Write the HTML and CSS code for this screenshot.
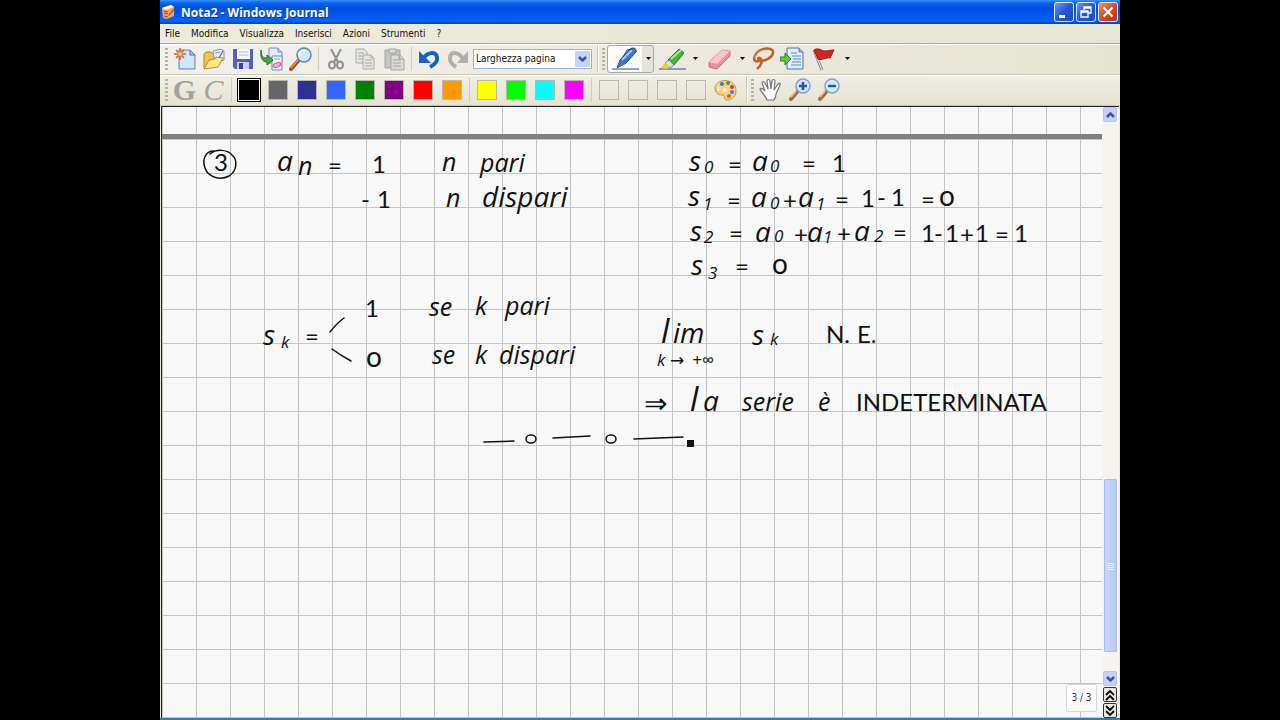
FILE: index.html
```
<!DOCTYPE html>
<html lang="it">
<head>
    <meta charset="UTF-8">
    <meta name="viewport" content="width=device-width, initial-scale=1.0">
    <title>Nota2 - Windows Journal</title>
    <link rel="stylesheet" href="styles.css">
</head>
<body>
<div class="window">
    <header class="titlebar">
        <svg class="app-icon" width="14" height="16" viewBox="0 0 14 16"><path d="M1 4l9-3 3 2v9l-7 3-4-1z" fill="#f3a45e"/><path d="M1 4l9-3 3 2-8 3z" fill="#fff0d8"/><path d="M3 7l4 1M3 9l4 1M3 12l4 1" stroke="#a3441c" stroke-width="1"/><path d="M13 4l-5 6-1 2 2-1 5-6z" fill="#c2541b"/></svg>
        <h1>Nota2 - Windows Journal</h1>
        <div class="caption-buttons">
            <button class="cap" aria-label="Riduci a icona"><svg width="18" height="18"><path d="M4 12h6v3H4z" fill="#fff"/></svg></button>
            <button class="cap" aria-label="Ripristina"><svg width="18" height="18"><path d="M7 7V4h7v6h-3M7 5h7M4 8h7v6H4zM4 9h7" fill="none" stroke="#fff" stroke-width="1.3"/></svg></button>
            <button class="cap close" aria-label="Chiudi"><svg width="18" height="18"><path d="M4.500 4.500l9 9M13.500 4.500l-9 9" stroke="#fff" stroke-width="2.200"/></svg></button>
        </div>
    </header>

    <nav class="menubar">
        <button>File</button>
        <button>Modifica</button>
        <button>Visualizza</button>
        <button>Inserisci</button>
        <button>Azioni</button>
        <button>Strumenti</button>
        <button>?</button>
    </nav>

    <div class="toolbar">
        <span class="grip"></span>
        <button class="tool" aria-label="Nuova nota"><svg width="24" height="24" viewBox="0 0 24 24"><path d="M6 3h11l5 5v14H6z" fill="#c3dafa" stroke="#6585bd"/><path d="M7 4h9v5l5 0v12H7z" fill="#eef5ff" opacity=".4"/><path d="M17 3v5h5z" fill="#a9c6ef" stroke="#4f74b4"/><path d="M7 1v12M1 7h12M3 3l8 8M11 3l-8 8" stroke="#e0561f" stroke-width="1.600"/><circle cx="7" cy="7" r="2" fill="#ffd35c"/></svg></button>
        <button class="tool" aria-label="Apri"><svg width="24" height="24" viewBox="0 0 24 24"><path d="M2 21V7l2-2h5l2 2h3v4" fill="#ecc74c" stroke="#a98a26"/><path d="M11 4l8-2 3 2v9l-9 3z" fill="#eaf2ff" stroke="#7f94b8"/><path d="M13 6l5-1" stroke="#7fa1d8"/><path d="M2 22l5-9 6-1 1-2 7 1-5 9z" fill="#ffe88b" stroke="#b59226"/><path d="M21 4l-4 7" stroke="#5579bd" stroke-width="1.500"/></svg></button>
        <button class="tool" aria-label="Salva"><svg width="24" height="24" viewBox="0 0 24 24"><path d="M2 2h20v20H4l-2-2z" fill="#5a5cbd"/><path d="M6 2h13v10H6z" fill="#f7f7fb"/><path d="M8 5h9M8 8h9" stroke="#b8b8cc"/><path d="M6 15h12v7H6z" fill="#c9cdea"/><path d="M8 16h4v6H8z" fill="#3f4097"/></svg></button>
        <button class="tool" aria-label="Esporta"><svg width="24" height="24" viewBox="0 0 24 24"><path d="M9 1h9l4 4v11H9z" fill="#e2edfc" stroke="#7092c9"/><path d="M12 9h10v14H12z" fill="#edf3fd" stroke="#6c86b9"/><path d="M18 1v4h4" fill="#b5ceef" stroke="#7092c9"/><path d="M14 12h6" stroke="#7fa1d8"/><ellipse cx="17" cy="18" rx="4" ry="2" fill="#f1b5cd" stroke="#c25583" transform="rotate(-20 17 18)"/><path d="M1 3c0 6 2 8 6 8V8l6 5-6 5v-3C2 15 0 10 1 3z" fill="#41a939" stroke="#1b7420"/></svg></button>
        <button class="tool" aria-label="Trova"><svg width="24" height="24" viewBox="0 0 24 24"><path d="M9 14l-7 8" stroke="#965423" stroke-width="4" stroke-linecap="round"/><path d="M9 13l-7 8" stroke="#dd9c5c" stroke-width="1.500"/><circle cx="15" cy="8" r="7" fill="#cfeafa" stroke="#5d88bf" stroke-width="1.500"/><path d="M10 8c1-4 4-5 7-4" fill="none" stroke="#fff" stroke-width="2"/></svg></button>
        <span class="sep"></span>
        <button class="tool" aria-label="Taglia"><svg width="24" height="24" viewBox="0 0 24 24" fill="none" stroke="#8e8e8e" stroke-width="2"><path d="M7 2l7 13M17 2l-7 13"/><ellipse cx="8" cy="18" rx="3" ry="3.500"/><ellipse cx="16" cy="18" rx="3" ry="3.500"/></svg></button>
        <button class="tool" aria-label="Copia"><svg width="24" height="24" viewBox="0 0 24 24" fill="#e6e5e1" stroke="#aaa"><path d="M3 2h8l3 3v11H3zM5 6h6M5 9h6M5 12h4"/><path d="M10 8h8l3 3v11H10zM12 13h7M12 16h7M12 19h7M18 8v3h3"/></svg></button>
        <button class="tool" aria-label="Incolla"><svg width="24" height="24" viewBox="0 0 24 24" fill="#dcdbd7" stroke="#a4a4a4"><path d="M3 3h15v18H3z" fill="#c6c5c1"/><path d="M7 2h7v4H7z"/><path d="M9 8h9l4 4v11H9zM11 13h8M11 16h8M11 19h8M17 8v4h5"/></svg></button>
        <span class="sep"></span>
        <button class="tool" aria-label="Annulla"><svg width="24" height="24" viewBox="0 0 24 24"><path d="M6 12c4-7 13-8 14-2 1 5-3 8-7 10" fill="none" stroke="#1b62bd" stroke-width="4"/><path d="M2 4v12h12z" fill="#1b62bd"/></svg></button>
        <button class="tool" aria-label="Ripeti"><svg width="24" height="24" viewBox="0 0 24 24"><path d="M17 12C13 5 5 4 4 10c-1 5 3 8 6 10" fill="none" stroke="#aeaeac" stroke-width="4"/><path d="M22 4v12H11z" fill="#aeaeac"/></svg></button>
        <span class="combo">
            <select aria-label="Zoom"><option>Larghezza pagina</option></select>
            <svg class="combo-arrow" width="15" height="16"><path d="M4 6l3.500 3.500L11 6" fill="none" stroke="#41558a" stroke-width="2.500"/></svg>
        </span>
        <span class="band"></span>
        <span class="grip"></span>
        <button class="split selected" aria-label="Penna"><svg width="30" height="24" viewBox="0 0 30 24"><path d="M3 22h27" stroke="#30478b"/><path d="M8 21l3-8L21 2c3-2 7-1 6 3L17 16z" fill="#3a76cf" stroke="#20448e"/><path d="M13 13L23 3" stroke="#9cc7f7" stroke-width="2"/><path d="M8 21l3-8 5 4z" fill="#5674a9"/><path d="M14 10l4-7 5-1" fill="none" stroke="#20448e"/></svg><svg class="drop" width="7" height="5"><path d="M1 1h5L3.500 4z"/></svg></button>
        <button class="split" aria-label="Evidenziatore"><svg width="30" height="24" viewBox="0 0 30 24"><path d="M3 22h27" stroke="#30478b"/><path d="M12 13L23 2l5 4-10 12z" fill="#46b439" stroke="#247d20"/><path d="M15 12L25 3" stroke="#a4ed83" stroke-width="2"/><path d="M9 16l4-3 5 5-4 3z" fill="#d8dde3" stroke="#7b8792"/><path d="M5 21l4-5 5 4-4 2z" fill="#e9ce2e"/></svg><svg class="drop" width="7" height="5"><path d="M1 1h5L3.500 4z"/></svg></button>
        <button class="split" aria-label="Gomma"><svg width="30" height="24" viewBox="0 0 30 24"><path d="M6 15L19 3l8 1v5L14 22l-8-2z" fill="#eb8f9d" stroke="#c16f7b"/><path d="M6 15L19 3l8 1-13 13z" fill="#fac5cb"/></svg><svg class="drop" width="7" height="5"><path d="M1 1h5L3.500 4z"/></svg></button>
        <button class="tool" aria-label="Selezione"><svg width="24" height="24" viewBox="0 0 24 24" fill="none" stroke="#bd6326" stroke-width="2.500"><path d="M8 14C1 16 2 9 8 4c6-4 15-3 14 2s-8 8-13 8c-3-1-2-4 0-3 3 2 2 7-3 11"/><path d="M4 11C5 6 10 3 15 3" stroke="#f3b17a" stroke-width="1"/></svg></button>
        <button class="tool" aria-label="Inserisci spazio"><svg width="24" height="24" viewBox="0 0 24 24"><path d="M7 1h12l4 4v17H7z" fill="#e4effe" stroke="#4a73b5"/><path d="M19 1v4h4" fill="#a7c7f0" stroke="#4a73b5"/><path d="M11 6h6M12 9h9M13 12h8M12 15h9M11 18h10" stroke="#5688c8"/><path d="M0 10h5V6l6 6-6 6v-4H0z" fill="#65c642" stroke="#277e20"/></svg></button>
        <button class="split" aria-label="Contrassegno"><svg width="30" height="24" viewBox="0 0 30 24"><path d="M6 3l8 20" stroke="#8a8a8a" stroke-width="3"/><path d="M6 3l8 20" stroke="#eee"/><path d="M6 3c5-3 7 1 11 1s5-1 9-1l-4 8c-5-1-8 3-12 1z" fill="#d42420" stroke="#8d1715"/></svg><svg class="drop" width="7" height="5"><path d="M1 1h5L3.500 4z"/></svg></button>
    </div>

    <div class="toolbar colors">
        <span class="grip"></span>
        <button class="tool letter bold">G</button>
        <button class="tool letter italic">C</button>
        <span class="sep"></span>
        <button class="tool" aria-label="Nero"><i class="swatch black current"></i></button>
        <button class="tool" aria-label="Grigio"><i class="swatch gray"></i></button>
        <button class="tool" aria-label="Blu scuro"><i class="swatch navy"></i></button>
        <button class="tool" aria-label="Blu"><i class="swatch blue"></i></button>
        <button class="tool" aria-label="Verde"><i class="swatch green"></i></button>
        <button class="tool" aria-label="Viola"><i class="swatch purple"></i></button>
        <button class="tool" aria-label="Rosso"><i class="swatch red"></i></button>
        <button class="tool" aria-label="Arancione"><i class="swatch orange"></i></button>
        <span class="sep"></span>
        <button class="tool" aria-label="Giallo"><i class="swatch yellow"></i></button>
        <button class="tool" aria-label="Verde chiaro"><i class="swatch lime"></i></button>
        <button class="tool" aria-label="Ciano"><i class="swatch cyan"></i></button>
        <button class="tool" aria-label="Magenta"><i class="swatch magenta"></i></button>
        <span class="sep"></span>
        <button class="tool" aria-label="Colore 1"><i class="swatch"></i></button>
        <button class="tool" aria-label="Colore 2"><i class="swatch"></i></button>
        <button class="tool" aria-label="Colore 3"><i class="swatch"></i></button>
        <button class="tool" aria-label="Colore 4"><i class="swatch"></i></button>
        <button class="tool" aria-label="Tavolozza"><svg width="24" height="24" viewBox="0 0 24 24"><path d="M2 9C4 1 18 0 22 8c3 7-1 14-8 14-4 0-1-4-4-5-3 0-8 0-8-8z" fill="#f9d183" stroke="#c9953f"/><circle cx="9" cy="6" r="2" fill="#4272c4"/><circle cx="15" cy="5" r="2" fill="#3fa047"/><circle cx="19" cy="9" r="2" fill="#d13b2e"/><circle cx="19" cy="14" r="2" fill="#3b7fd4"/><circle cx="16" cy="18" r="2" fill="#df5a36"/><circle cx="6" cy="11" r="2" fill="#fff3d2"/><circle cx="12" cy="12" r="2" fill="#fff7e4"/></svg></button>
        <span class="band"></span>
        <span class="grip"></span>
        <button class="tool" aria-label="Mano"><svg width="24" height="24" viewBox="0 0 24 24"><path d="M8 22c-1-4-6-8-7-11 1-2 4 1 5 2L3 5c0-2 2-2 3 0l3 6L8 3c0-2 3-2 3 0l1 8 1-8c0-2 3-2 3 0l-1 9 4-6c1-1 3-1 2 1l-4 9c0 3-1 4-2 6z" fill="#fff" stroke="#777" stroke-width="1.200"/></svg></button>
        <button class="tool" aria-label="Zoom avanti"><svg width="24" height="24" viewBox="0 0 24 24"><path d="M9 14l-6 7" stroke="#a36c3a" stroke-width="4" stroke-linecap="round"/><path d="M8 13l-5 6" stroke="#ecc49b" stroke-width="1.500"/><circle cx="15" cy="8" r="7" fill="#d6e9fb" stroke="#7fa3d3" stroke-width="1.500"/><path d="M15 4v8M11 8h8" stroke="#2458ac" stroke-width="2.500"/></svg></button>
        <button class="tool" aria-label="Zoom indietro"><svg width="24" height="24" viewBox="0 0 24 24"><path d="M9 14l-6 7" stroke="#a36c3a" stroke-width="4" stroke-linecap="round"/><path d="M8 13l-5 6" stroke="#ecc49b" stroke-width="1.500"/><circle cx="15" cy="8" r="7" fill="#d6e9fb" stroke="#7fa3d3" stroke-width="1.500"/><path d="M11 8h8" stroke="#2458ac" stroke-width="2.500"/></svg></button>
    </div>

    <main class="workspace">
        <div class="paper">
            <div class="page-break"></div>
            <!-- notes, one text per pen group -->
            <svg class="ink" width="100%" height="100%">
                <g transform="translate(-162 -107)">
                    <path class="stroke" d="M214 151C205 151 202 160 205 168c3 9 15 13 24 8 8-5 9-16 3-21-5-6-16-6-22-1"/>
                    <text class="num" x="214" y="171">3</text>
                    <text class="big" x="277" y="171">a</text><text class="mid" x="298" y="175">n</text>
                    <text class="num" x="328" y="174">=</text><text class="num" x="372" y="173">1</text>
                    <text class="mid" x="442" y="171">n</text><text class="mid" x="480" y="172">pari</text>
                    <text class="num" x="361" y="208">-</text><text class="num" x="377" y="208">1</text>
                    <text class="mid" x="446" y="207">n</text><text class="big" x="482" y="207">dispari</text>

                    <text class="big" x="689" y="171">s</text><text class="sub" x="704" y="173">0</text>
                    <text class="num" x="728" y="173">=</text><text class="big" x="752" y="171">a</text><text class="sub" x="770" y="172">0</text>
                    <text class="num" x="802" y="172">=</text><text class="num" x="832" y="172">1</text>

                    <text class="big" x="688" y="206">s</text><text class="sub" x="703" y="210">1</text>
                    <text class="num" x="727" y="209">=</text><text class="big" x="751" y="207">a</text><text class="sub" x="770" y="209">0</text>
                    <text class="num" x="783" y="209">+</text><text class="big" x="798" y="207">a</text><text class="sub" x="816" y="210">1</text>
                    <text class="num" x="835" y="208">=</text><text class="num" x="861" y="207">1</text><text class="num" x="877" y="206">-</text><text class="num" x="891" y="206">1</text>
                    <text class="num" x="921" y="208">=</text><text class="num oval" x="939" y="206">o</text>

                    <text class="big" x="690" y="241">s</text><text class="sub" x="704" y="243">2</text>
                    <text class="num" x="729" y="242">=</text><text class="big" x="755" y="242">a</text><text class="sub" x="774" y="242">0</text>
                    <text class="num" x="794" y="243">+</text><text class="big" x="807" y="242">a</text><text class="sub" x="823" y="243">1</text>
                    <text class="num" x="837" y="242">+</text><text class="big" x="854" y="241">a</text><text class="sub" x="874" y="242">2</text>
                    <text class="num" x="893" y="241">=</text><text class="num" x="921" y="242">1</text><text class="num" x="934" y="242">-</text><text class="num" x="945" y="242">1</text>
                    <text class="num" x="960" y="243">+</text><text class="num" x="975" y="242">1</text><text class="num" x="995" y="243">=</text><text class="num" x="1014" y="242">1</text>

                    <text class="big" x="691" y="275">s</text><text class="sub" x="708" y="279">3</text>
                    <text class="num" x="735" y="275">=</text><text class="num oval" x="772" y="274">o</text>

                    <text class="big" x="263" y="345">s</text><text class="sub" x="281" y="348">k</text><text class="num" x="305" y="345">=</text>
                    <path class="stroke" d="M330 332q7-9 14-14M332 349q8 6 19 12"/>
                    <text class="num" x="365" y="317">1</text><text class="num oval" x="366" y="367">o</text>
                    <text class="mid" x="429" y="316">se</text><text class="mid" x="475" y="315">k</text><text class="mid" x="505" y="315">pari</text>
                    <text class="mid" x="432" y="364">se</text><text class="mid" x="475" y="364">k</text><text class="mid" x="499" y="364">dispari</text>

                    <text class="huge" x="661" y="343">l</text><text class="big" x="673" y="343">im</text>
                    <text class="sub" x="657" y="366">k</text><text class="sub" x="670" y="366">→</text><text class="sub" x="692" y="366">+∞</text>
                    <text class="big" x="752" y="345">s</text><text class="sub" x="770" y="345">k</text>
                    <text class="num" x="826" y="343">N.</text><text class="num" x="857" y="343">E.</text>
                    <text class="num arrow" x="644" y="413">⇒</text>
                    <text class="huge" x="690" y="411">l</text><text class="big" x="703" y="411">a</text>
                    <text class="mid" x="742" y="411">serie</text><text class="mid" x="818" y="411">è</text>
                    <text class="num" x="856" y="411">INDETERMINATA</text>

                    <path class="stroke" d="M484 442l30-1M553 438q18-1 37-2M634 439l49-2"/>
                    <ellipse class="stroke" cx="531" cy="439" rx="5" ry="4"/>
                    <ellipse class="stroke" cx="611" cy="439" rx="5" ry="4"/>
                    <rect x="687" y="440" width="7" height="7"/>
                </g>
            </svg>
            <span class="page-number">3 / 3</span>
        </div>
        <aside class="scrollbar">
            <button class="scroll-btn" aria-label="Su"><svg width="13" height="14"><path d="M3 9l3.500-3.500L10 9" fill="none" stroke="#41558a" stroke-width="2.500"/></svg></button>
            <div class="track">
                <div class="thumb"><svg width="7" height="8"><path d="M0 1.500h7M0 3.500h7M0 5.500h7M0 7.500h7" stroke="#e9f0ff"/></svg></div>
            </div>
            <button class="scroll-btn" aria-label="Giù"><svg width="13" height="14"><path d="M3 5l3.500 3.500L10 5" fill="none" stroke="#41558a" stroke-width="2.500"/></svg></button>
            <button class="page-btn" aria-label="Pagina precedente"><svg width="12" height="12"><path d="M2 6l4-4 4 4M2 11l4-4 4 4" fill="none" stroke="#000" stroke-width="1.800"/></svg></button>
            <button class="page-btn" aria-label="Pagina successiva"><svg width="12" height="12"><path d="M2 1l4 4 4-4M2 6l4 4 4-4" fill="none" stroke="#000" stroke-width="1.800"/></svg></button>
        </aside>
    </main>
</div>
</body>
</html>
```
FILE: styles.css
```
* {
    box-sizing: border-box;
}
body {
    margin: 0;
    background: #000;
    font-family: "DejaVu Sans Condensed", "DejaVu Sans", sans-serif;
    font-size: 10px;
}
button {
    padding: 0;
    border: 0;
    background: none;
    font: inherit;
    color: inherit;
}
svg {
    display: block;
}
.window {
    display: flex;
    flex-direction: column;
    width: 75%;
    height: 100vh;
    margin: 0 auto;
    background: #ebe9dc;
    border-bottom: 2px solid #3b78bb;
}

/* title bar */
.titlebar {
    display: flex;
    align-items: center;
    flex: none;
    height: 24px;
    padding: 0 2px 0 1px;
    background: linear-gradient(#3a93fa 0, #0f62ee 3px, #0050dc 8px, #0058f0 15px, #0064fd 21px, #0241b5 24px);
}
.titlebar h1 {
    flex: 1;
    margin: 0 0 0 6px;
    font: bold 12px "Open Sans", sans-serif;
    color: #fff;
    text-shadow: 1px 1px #0b3a9c;
}
.caption-buttons {
    display: flex;
    gap: 2px;
}
.cap {
    display: flex;
    align-items: center;
    justify-content: center;
    width: 20px;
    height: 20px;
    border: 1px solid #d9e6fb;
    border-radius: 3px;
    background: linear-gradient(135deg, #6d96ee, #2457d6 50%, #1b4bc4);
}
.cap.close {
    background: linear-gradient(135deg, #ea9478, #d84a24 50%, #b83512);
}

/* menu */
.menubar {
    display: flex;
    align-items: center;
    flex: none;
    gap: 11px;
    height: 20px;
    padding: 0 5px 1px;
    background: linear-gradient(90deg, #edebdc, #e5e6d6);
    border-bottom: 1px solid #aaa893;
    color: #111;
}

/* toolbars */
.toolbar {
    display: flex;
    align-items: center;
    flex: none;
    height: 31px;
    padding: 0 0 2px 3px;
    background: linear-gradient(90deg, #f1f0eb, #ece8df 60%, #e5e4d1);
    border-top: 1px solid #fff;
    border-bottom: 1px solid #c9c6b4;
}
.colors {
    background: linear-gradient(#efeee6, #e6e3d3);
}
.grip {
    width: 3px;
    height: 22px;
    margin: 0 2px;
    background: repeating-linear-gradient(#b5b2a2 0 2px, transparent 2px 4px);
}
.tool {
    display: flex;
    align-items: center;
    justify-content: center;
    width: 29px;
    height: 27px;
}
.sep {
    width: 6px;
    height: 24px;
    background: linear-gradient(#cfccbd, #cfccbd) center / 1px 100% no-repeat;
}
.band {
    width: 8px;
    height: 100%;
    background: linear-gradient(90deg, #cbc8b8 50%, #fff 50%) 5px 0 / 2px 100% no-repeat;
}
.colors .band {
    width: 10px;
    background-position: 7px 0;
}
.split {
    display: flex;
    align-items: center;
    gap: 6px;
    width: 47px;
    height: 28px;
    padding-left: 1px;
    border: 1px solid transparent;
    border-radius: 3px;
}
.split.selected {
    border-color: #a3a9ad;
    background: linear-gradient(90deg, #fbfbf8 34px, #e3e3dc 34px);
}
.combo {
    position: relative;
    width: 119px;
    height: 20px;
    margin-left: 1px;
}
.combo select {
    appearance: none;
    width: 100%;
    height: 100%;
    padding: 0 2px;
    border: 1px solid #9fb4c9;
    border-radius: 0;
    background: #fff;
    color: #111;
    font: inherit;
}
.combo-arrow {
    position: absolute;
    top: 2px;
    right: 2px;
    background: #c4d3fb;
    pointer-events: none;
}
.letter {
    font-family: "Liberation Serif", serif;
    font-size: 30px;
    line-height: 27px;
    color: #a3a29e;
}
.bold {
    font-weight: bold;
}
.italic {
    font-style: italic;
}
.swatch {
    width: 20px;
    height: 20px;
    border: 1px solid #b9b7ab;
}
.swatch.current {
    width: 24px;
    height: 24px;
    border: 1px solid #000;
    box-shadow: inset 0 0 0 1px #fff;
}
.black { background: #000; }
.gray { background: #666; }
.navy { background: #2e3192; }
.blue { background: #3366ff; }
.green { background: #008000; }
.purple { background: #800080; }
.red { background: #ff0000; }
.orange { background: #ff9900; }
.yellow { background: #ffff00; }
.lime { background: #00ff00; }
.cyan { background: #00ffff; }
.magenta { background: #ff00ff; }

/* note page */
.workspace {
    display: flex;
    flex: 1;
    min-height: 0;
    margin: 0 1px;
    border-top: 1px solid #222;
    border-left: 1px solid #222;
}
.paper {
    position: relative;
    flex: 1;
    overflow: hidden;
    background-color: #f8f8f8;
    background-image:
        linear-gradient(90deg, #c4c4c4 1px, transparent 1px),
        linear-gradient(#c4c4c4 1px, transparent 1px);
    background-size: 34px 34px;
    background-position: 34px 32px;
}
.page-break {
    height: 5px;
    margin-top: 27px;
    background: #808080;
}
.ink {
    position: absolute;
    inset: 0;
    fill: #111;
}
.stroke {
    fill: none;
    stroke: #111;
    stroke-width: 1.500;
    stroke-linecap: round;
}
.ink text {
    font-family: "Open Sans", "DejaVu Sans", sans-serif;
    font-style: italic;
    font-weight: 400;
}
.ink .mid { font-size: 25px; }
.ink .big { font-size: 28px; }
.ink .huge { font-size: 33px; }
.ink .sub { font-size: 17px; }
.ink .num {
    font-family: Lato, "DejaVu Sans", sans-serif;
    font-style: normal;
    font-size: 24px;
}
.ink .oval { font-size: 28px; }
.ink .arrow {
    font-family: "Noto Sans", "DejaVu Sans", sans-serif;
    font-weight: 300;
    font-size: 28px;
}
.page-number {
    position: absolute;
    right: 5px;
    bottom: 6px;
    width: 31px;
    height: 28px;
    border: 1px solid #d6d6e0;
    border-radius: 2px;
    background: #fdfdfd;
    color: #333;
    line-height: 26px;
    text-align: center;
}

/* scrollbar */
.scrollbar {
    display: flex;
    flex-direction: column;
    align-items: center;
    width: 17px;
    padding-right: 1px;
    background: #f5f4ee;
}
.scroll-btn {
    width: 14px;
    height: 15px;
    border: 1px solid #b4c5f0;
    border-radius: 2px;
    background: #c4d2fb;
}
.track {
    display: flex;
    flex: 1;
    flex-direction: column;
    width: 13px;
}
.track::before {
    content: "";
    flex: 359;
}
.track::after {
    content: "";
    flex: 19;
}
.thumb {
    display: flex;
    flex: 172;
    align-items: center;
    justify-content: center;
    border: 1px solid #a7bbf3;
    border-radius: 1px;
    background: linear-gradient(90deg, #c9d6ff, #b7c9fb);
}
.page-btn {
    display: flex;
    align-items: center;
    justify-content: center;
    width: 14px;
    height: 15px;
    margin-top: 1px;
    border: 1px solid #333;
    border-radius: 2px;
    background: #eceadd;
}
```
